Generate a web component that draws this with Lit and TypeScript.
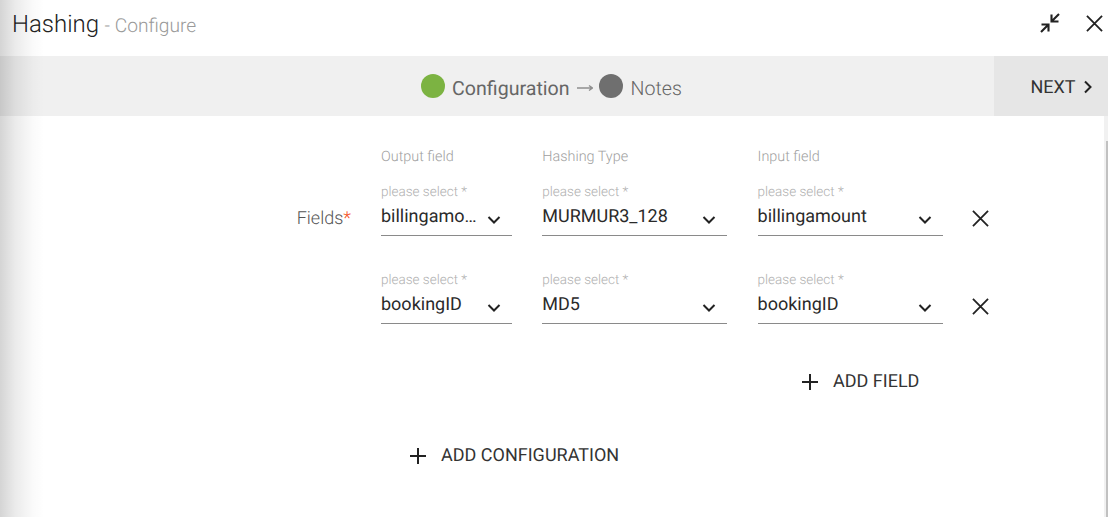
import { LitElement, html, css } from "lit";
import { customElement } from "lit/decorators.js";

const chevron = html`<svg class="chev" width="14" height="10" viewBox="0 0 14 10"><path d="M1.5 2 L7 7.5 L12.5 2" fill="none" stroke="#222" stroke-width="2"/></svg>`;
const cross = (s: number, c = "#222") => html`<svg width=${s} height=${s} viewBox="0 0 18 18"><path d="M1 1 L17 17 M17 1 L1 17" fill="none" stroke=${c} stroke-width="1.9"/></svg>`;
const plus = html`<svg width="16" height="16" viewBox="0 0 16 16"><path d="M8 0 V16 M0 8 H16" fill="none" stroke="#222" stroke-width="2"/></svg>`;

type Row = [string, string, string];
const rows: Row[] = [
  ["billingamount", "MURMUR3_128", "billingamount"],
  ["bookingID", "MD5", "bookingID"],
];

@customElement("app-root")
export class AppRoot extends LitElement {
  static styles = css`
    :host { display: block; position: relative; width: 1108px; height: 517px; overflow: hidden; background: #fff; font-family: Roboto, sans-serif; color: #222; text-rendering: geometricPrecision; }
    .shade { position: absolute; left: 0; top: 0; bottom: 0; width: 44px; pointer-events: none;
      background: linear-gradient(to right, rgba(0,0,0,.17), rgba(0,0,0,.08) 35%, rgba(0,0,0,.02) 75%, rgba(0,0,0,0)); }
    .scroll { position: absolute; right: 0; top: 116px; bottom: 0; width: 4px; background: #f1f1f1; }
    .thumb { position: absolute; right: 0; top: 25px; bottom: 0; width: 2px; background: #c1c1c1; }
    header { height: 56px; display: flex; align-items: flex-start; padding: 0 5px 0 12px; box-sizing: border-box; }
    .titles { line-height: 48px; }
    .title { font-size: 24px; font-weight: 300; color: #222; }
    .sub { font-size: 19.2px; font-weight: 300; color: #9a9a9a; margin-left: 1.5px; }
    .win { margin-left: auto; margin-top: 13px; display: flex; align-items: center; gap: 26px; }
    .win svg { display: block; }
    .bar { height: 60px; background: #f0f0f0; display: flex; }
    .steps { flex: 1; display: flex; align-items: center; justify-content: center; font-size: 19.6px; color: #666; padding-left: 109px; box-sizing: border-box; }
    .dot { width: 24px; height: 24px; border-radius: 50%; margin-right: 7px; }
    .green { background: #7cb342; }
    .grey { background: #6f6f6f; margin-right: 8px; }
    .step { position: relative; top: 2px; }
    .step1 { font-weight: 400; }
    .arrow { margin: 4px 6px 0 7px; display: block; }
    .step2 { font-weight: 300; color: #666; }
    .next { width: 114px; background: #e6e6e6; display: flex; align-items: center; justify-content: center; gap: 7px; font-size: 18px; color: #333; padding: 3px 0 0 21px; box-sizing: border-box; }
    .next svg { display: block; margin-top: -1px; }
    main { padding: 32px 0 0 0; }
    .heads, .row { display: grid; grid-template-columns: 131px 185px 185px; column-gap: 30.3px; margin-left: 381px; width: max-content; }
    .heads { font-size: 14.4px; color: #a0a0a0; font-weight: 300; line-height: 18px; height: 18px; }
    .row { position: relative; margin-top: 19px; height: 69px; align-content: start; }
    .heads + .row { margin-top: 18px; }
    .label { position: absolute; right: calc(100% + 30px); top: 23px; font-size: 18px; font-weight: 300; color: #555; white-space: nowrap; line-height: 24px; }
    .label b { color: #f4511e; font-weight: 300; }
    .field { height: 50px; padding-top: 1px; border-bottom: 1px solid #8a8a8a; position: relative; }
    .hint { font-size: 13.5px; font-weight: 300; color: #b0b0b0; line-height: 15px; display: block; }
    .val { display: flex; align-items: center; font-size: 18px; color: #2a2a2a; line-height: 26px; margin-top: 4px; }
    .txt { flex: 1; min-width: 0; overflow: hidden; white-space: nowrap; text-overflow: ellipsis; }
    .chev { margin: 6px 11px 0 10px; flex: none; }
    .del { position: absolute; left: 590.5px; top: 26px; display: block; }
    .action { display: flex; align-items: center; font-size: 18px; color: #333; gap: 15px; line-height: 24px; }
    .add-field { margin: 29px 0 0 802px; }
    .add-conf { margin: 50px 0 0 410px; }
  `;

  private field(v: string) {
    return html`<div class="field"><span class="hint">please select *</span><div class="val"><span class="txt">${v}</span>${chevron}</div></div>`;
  }

  render() {
    return html`
      <header>
        <div class="titles"><span class="title">Hashing</span> <span class="sub">- Configure</span></div>
        <div class="win">
          <svg width="20" height="20" viewBox="0 0 20 20">
            <path d="M19 1 L11.5 8.5 M11.5 1.5 V8.5 H18.5 M1 19 L8.5 11.5 M1.5 11.5 H8.5 V18.5" fill="none" stroke="#222" stroke-width="2.1"/>
          </svg>
          ${cross(17)}
        </div>
      </header>
      <div class="bar">
        <div class="steps">
          <span class="dot green"></span><span class="step step1">Configuration</span>
          <svg class="arrow" width="16" height="10" viewBox="0 0 16 10"><path d="M0 5 H15 M12 2.5 L15.5 5 L12 7.5" fill="none" stroke="#8f8f8f" stroke-width="1.4"/></svg>
          <span class="dot grey"></span><span class="step step2">Notes</span>
        </div>
        <div class="next">NEXT <svg width="10" height="14" viewBox="0 0 10 14"><path d="M2 1.5 L7.5 7 L2 12.5" fill="none" stroke="#222" stroke-width="2"/></svg></div>
      </div>
      <main>
        <div class="heads"><span>Output field</span><span>Hashing Type</span><span>Input field</span></div>
        ${rows.map((r, i) => html`
          <div class="row">
            ${i === 0 ? html`<span class="label">Fields<b>*</b></span>` : ""}
            ${r.map((v) => this.field(v))}
            <span class="del">${cross(17)}</span>
          </div>`)}
        <div class="action add-field">${plus}<span>ADD FIELD</span></div>
        <div class="action add-conf">${plus}<span>ADD CONFIGURATION</span></div>
      </main>
      <div class="shade"></div>
      <div class="scroll"><div class="thumb"></div></div>
    `;
  }
}
